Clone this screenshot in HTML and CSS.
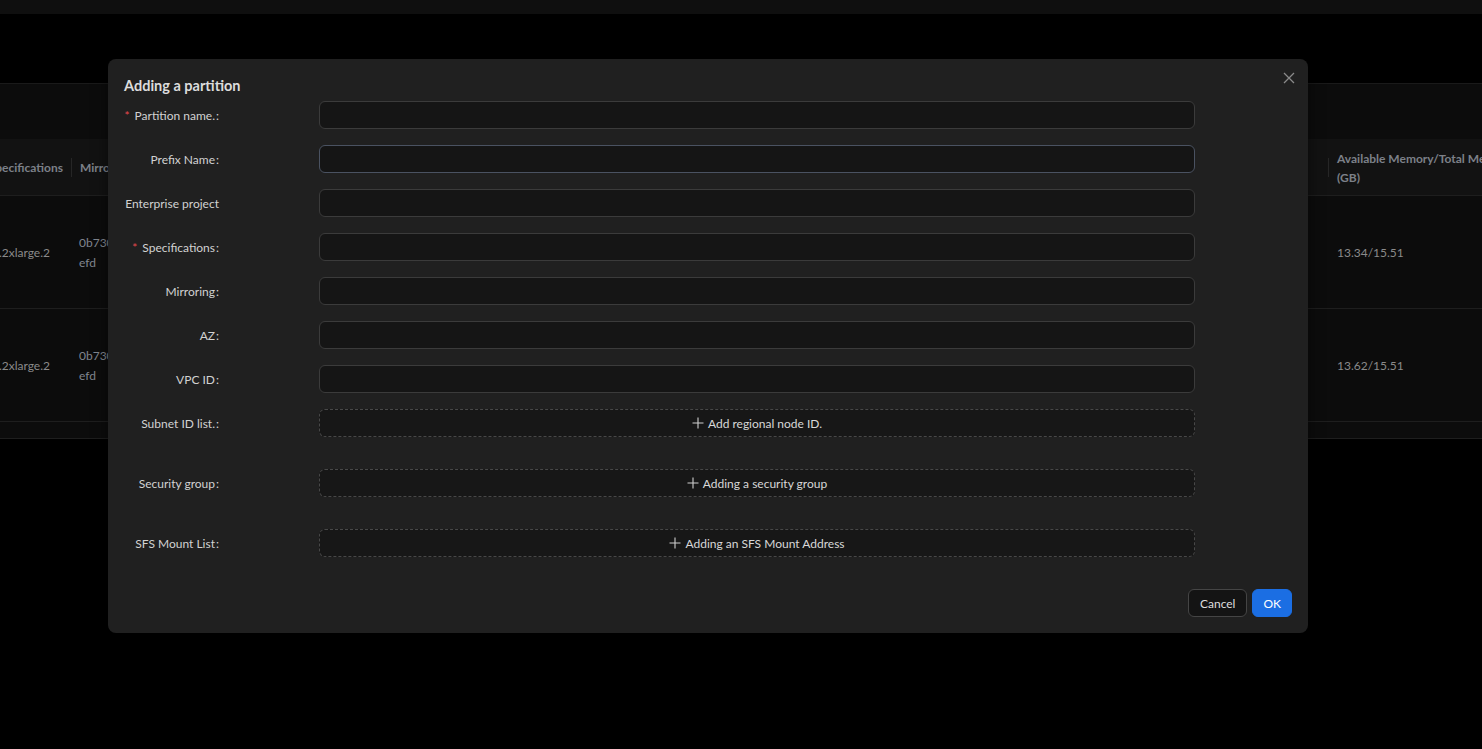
FILE: index.html
```html
<!DOCTYPE html>
<html lang="en">
<head>
    <meta charset="UTF-8">
    <meta name="viewport" content="width=device-width, initial-scale=1.0">
    <title>Partitions</title>
    <link rel="stylesheet" href="styles.css">
</head>
<body>

    <div class="topbar"></div>

    <div class="table-wrap">
        <div class="toolbar"></div>
        <div class="grid">
            <div class="th first">Specifications</div>
            <div class="th sep">Mirroring</div>
            <div class="th sep">Subnet</div>
            <div class="th sep"><span class="th-text">Available Memory/Total Memory (GB)</span></div>

            <div class="td first">c7.2xlarge.2</div>
            <div class="td id">0b73040b9e0e4cbd8f0e5cd4b5b2f2<br>efd</div>
            <div class="td"></div>
            <div class="td">13.34/15.51</div>

            <div class="td first">c7.2xlarge.2</div>
            <div class="td id">0b73040b9e0e4cbd8f0e5cd4b5b2f2<br>efd</div>
            <div class="td"></div>
            <div class="td">13.62/15.51</div>
        </div>
        <div class="table-foot"></div>
    </div>

    <div class="modal">
        <svg class="close" width="12" height="12" viewBox="0 0 12 12">
            <path d="M1 1L11 11M11 1L1 11" stroke="#8a8a8a" stroke-width="1.3" fill="none"/>
        </svg>
        <h2 class="modal-title">Adding a partition</h2>

        <div class="form">
            <div class="form-row">
                <label class="label"><span class="req">*</span>Partition name.<span class="colon">:</span></label>
                <div class="input"></div>
            </div>
            <div class="form-row">
                <label class="label">Prefix Name<span class="colon">:</span></label>
                <div class="input hover"></div>
            </div>
            <div class="form-row">
                <label class="label">Enterprise project</label>
                <div class="input"></div>
            </div>
            <div class="form-row">
                <label class="label"><span class="req">*</span>Specifications<span class="colon">:</span></label>
                <div class="input"></div>
            </div>
            <div class="form-row">
                <label class="label">Mirroring<span class="colon">:</span></label>
                <div class="input"></div>
            </div>
            <div class="form-row">
                <label class="label">AZ<span class="colon">:</span></label>
                <div class="input"></div>
            </div>
            <div class="form-row">
                <label class="label">VPC ID<span class="colon">:</span></label>
                <div class="input"></div>
            </div>
            <div class="form-row list">
                <label class="label">Subnet ID list.<span class="colon">:</span></label>
                <button class="add-btn">
                    <svg width="12" height="12" viewBox="0 0 12 12"><path d="M6 0.5V11.5M0.5 6H11.5" stroke="#cfcfcf" stroke-width="1.1" fill="none"/></svg>
                    Add regional node ID.
                </button>
            </div>
            <div class="form-row list">
                <label class="label">Security group<span class="colon">:</span></label>
                <button class="add-btn">
                    <svg width="12" height="12" viewBox="0 0 12 12"><path d="M6 0.5V11.5M0.5 6H11.5" stroke="#cfcfcf" stroke-width="1.1" fill="none"/></svg>
                    Adding a security group
                </button>
            </div>
            <div class="form-row list">
                <label class="label">SFS Mount List<span class="colon">:</span></label>
                <button class="add-btn">
                    <svg width="12" height="12" viewBox="0 0 12 12"><path d="M6 0.5V11.5M0.5 6H11.5" stroke="#cfcfcf" stroke-width="1.1" fill="none"/></svg>
                    Adding an SFS Mount Address
                </button>
            </div>
        </div>

        <div class="modal-footer">
            <button class="btn">Cancel</button>
            <button class="btn primary">OK</button>
        </div>
    </div>

</body>
</html>
```

FILE: styles.css
```css
body{
    margin: 0;
    background-color: #000;
    font-family: Lato, "Noto Sans", sans-serif;
    font-size: 12px;
    overflow: hidden;
    height: 749px;
}

.topbar{
    height: 14px;
    background-color: #0f0f0f;
}

.table-wrap{
    margin-top: 69px;
    overflow: hidden;
    border-top: 1px solid #1a1a1a;
    background-color: #0c0c0c;
}
.toolbar{
    height: 55px;
}
.grid{
    display: grid;
    grid-template-columns: 88px 150px 1107px 220px;
    width: 1565px;
    margin-left: -17px;
}
.th{
    height: 55px;
    padding: 1px 9px 0;
    background-color: #121212;
    border-bottom: 1px solid #1e1e1e;
    color: #7c8088;
    font-weight: bold;
    line-height: 19px;
    display: flex;
    align-items: center;
    position: relative;
}
.th.first{
    justify-content: flex-end;
    padding-right: 8px;
}
.th-text{
    width: 180px;
}
.th.sep::before{
    content: "";
    position: absolute;
    left: 0;
    top: 19px;
    height: 19px;
    border-left: 1px solid #262626;
}
.td{
    height: 110px;
    padding: 2px 9px 0;
    border-bottom: 1px solid #1e1e1e;
    color: #8a8a8a;
    line-height: 20px;
    display: flex;
    align-items: center;
    white-space: nowrap;
}
.td.first{
    justify-content: flex-end;
    padding-right: 21px;
}
.td.id{
    color: #80868f;
    padding-left: 8px;
}
.table-foot{
    height: 16px;
    border-bottom: 1px solid #1e1e1e;
}

/* dialog */
.modal{
    position: absolute;
    left: 108px;
    top: 59px;
    width: 1168px;
    height: 541px;
    padding: 17px 16px 16px;
    background-color: #202020;
    border-radius: 8px;
    box-shadow: 0 4px 16px rgba(0, 0, 0, 0.5);
}
.close{
    position: absolute;
    top: 13px;
    right: 13px;
}
.modal-title{
    margin: 0 0 5px;
    font-size: 14.5px;
    line-height: 20px;
    font-weight: bold;
    color: #dcdcdc;
}

.form-row{
    display: flex;
    align-items: center;
    height: 28px;
    margin-bottom: 16px;
}
.form-row.list{
    margin-bottom: 32px;
}
.label{
    width: 95px;
    margin-right: 100px;
    text-align: right;
    white-space: nowrap;
    color: #d2d2d2;
}
.req{
    color: #e5484d;
    margin-right: 5px;
}
.colon{
    margin-left: 1px;
}
.input{
    width: 874px;
    height: 26px;
    background-color: #151515;
    border: 1px solid #3b3b3b;
    border-radius: 6px;
}
.input.hover{
    border-color: #4a5261;
}
.add-btn{
    width: 876px;
    height: 28px;
    background-color: #171717;
    border: 1px dashed #484848;
    border-radius: 6px;
    color: #d8d8d8;
    font-family: inherit;
    font-size: 12px;
    display: flex;
    align-items: center;
    justify-content: center;
    gap: 4px;
    cursor: pointer;
}

.modal-footer{
    display: flex;
    justify-content: flex-end;
    gap: 5px;
}
.btn{
    height: 28px;
    padding: 0 11px;
    border: 1px solid #454545;
    border-radius: 6px;
    background-color: #141414;
    color: #dedede;
    font-family: inherit;
    font-size: 12px;
    cursor: pointer;
}
.btn.primary{
    background-color: #1b6ee3;
    border-color: #1b6ee3;
    color: #fff;
    padding: 0 10px;
}
```
